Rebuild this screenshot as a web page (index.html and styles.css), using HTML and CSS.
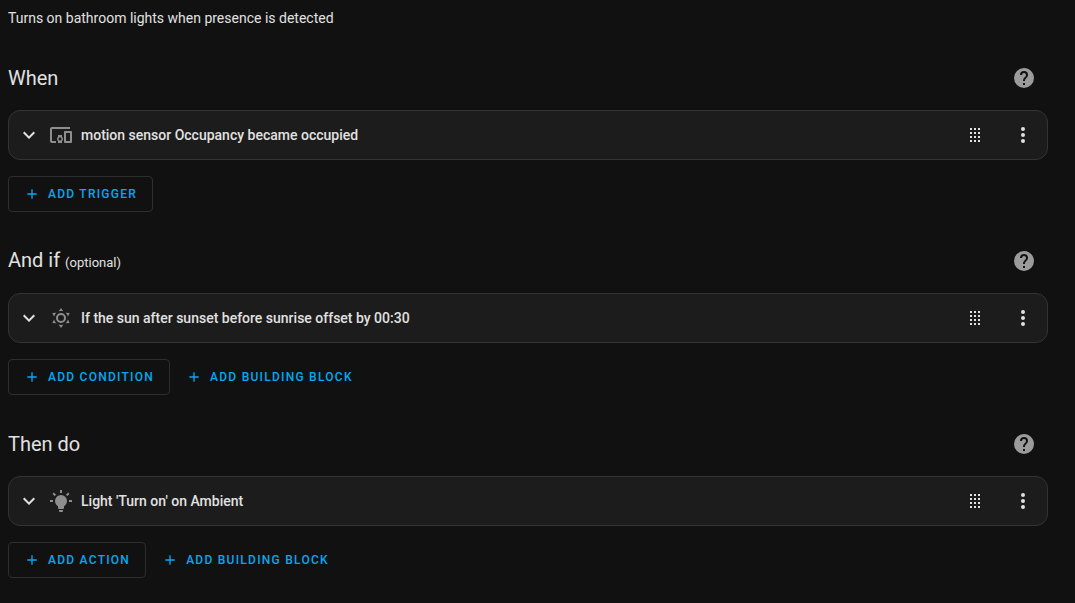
FILE: index.html
```html
<!DOCTYPE html>
<html lang="en">
<head>
  <meta charset="utf-8">
  <meta name="viewport" content="width=device-width, initial-scale=1">
  <title>Automation Editor</title>
  <link rel="stylesheet" href="styles.css">
</head>
<body>
  <!-- shared icons -->
  <svg class="sprite" aria-hidden="true">
    <symbol id="chevron" viewBox="0 0 24 24"><path d="M7.41,8.58L12,13.17L16.59,8.58L18,10L12,16L6,10L7.41,8.58Z"/></symbol>
    <symbol id="plus" viewBox="0 0 24 24"><path d="M19,13H13V19H11V13H5V11H11V5H13V11H19V13Z"/></symbol>
    <symbol id="help" viewBox="0 0 24 24"><path d="M15.07,11.25L14.17,12.17C13.45,12.89 13,13.5 13,15H11V14.5C11,13.39 11.45,12.39 12.17,11.67L13.41,10.41C13.78,10.05 14,9.55 14,9C14,7.89 13.1,7 12,7A2,2 0 0,0 10,9H8A4,4 0 0,1 12,5A4,4 0 0,1 16,9C16,9.88 15.64,10.67 15.07,11.25M13,19H11V17H13M12,2A10,10 0 0,0 2,12A10,10 0 0,0 12,22A10,10 0 0,0 22,12C22,6.47 17.5,2 12,2Z"/></symbol>
    <symbol id="drag" viewBox="0 0 24 24"><path d="M7,19V17H9V19H7M11,19V17H13V19H11M15,19V17H17V19H15M7,15V13H9V15H7M11,15V13H13V15H11M15,15V13H17V15H15M7,11V9H9V11H7M11,11V9H13V11H11M15,11V9H17V11H15M7,7V5H9V7H7M11,7V5H13V7H11M15,7V5H17V7H15Z"/></symbol>
    <symbol id="dots" viewBox="0 0 24 24"><path d="M12,16A2,2 0 0,1 14,18A2,2 0 0,1 12,20A2,2 0 0,1 10,18A2,2 0 0,1 12,16M12,10A2,2 0 0,1 14,12A2,2 0 0,1 12,14A2,2 0 0,1 10,12A2,2 0 0,1 12,10M12,4A2,2 0 0,1 14,6A2,2 0 0,1 12,8A2,2 0 0,1 10,6A2,2 0 0,1 12,4Z"/></symbol>
  </svg>

  <main class="container">
    <p class="description">Turns on bathroom lights when presence is detected</p>

    <section class="section">
      <div class="header">
        <h2>When</h2>
        <button type="button" class="icon-button help" aria-label="Learn about triggers"><svg class="icon"><use href="#help"/></svg></button>
      </div>
      <div class="card">
        <button type="button" class="toggle" aria-expanded="false">
          <svg class="icon"><use href="#chevron"/></svg>
          <svg class="icon type" viewBox="0 0 24 24"><path d="M3 6H21V4H3C1.9 4 1 4.9 1 6V18C1 19.1 1.9 20 3 20H7V18H3V6M13 12H9V13.78C8.39 14.33 8 15.11 8 16C8 16.89 8.39 17.67 9 18.22V20H13V18.22C13.61 17.67 14 16.88 14 16S13.61 14.33 13 13.78V12M11 17.5C10.17 17.5 9.5 16.83 9.5 16S10.17 14.5 11 14.5 12.5 15.17 12.5 16 11.83 17.5 11 17.5M22 8H16C15.5 8 15 8.5 15 9V19C15 19.5 15.5 20 16 20H22C22.5 20 23 19.5 23 19V9C23 8.5 22.5 8 22 8M21 18H17V10H21V18Z"/></svg>
          <span>motion sensor Occupancy became occupied</span>
        </button>
        <button type="button" class="icon-button" aria-label="Move"><svg class="icon"><use href="#drag"/></svg></button>
        <button type="button" class="icon-button" aria-label="Menu"><svg class="icon"><use href="#dots"/></svg></button>
      </div>
      <div class="actions">
        <button type="button" class="button outlined"><svg class="plus"><use href="#plus"/></svg>Add trigger</button>
      </div>
    </section>

    <section class="section">
      <div class="header">
        <h2>And if <small>(optional)</small></h2>
        <button type="button" class="icon-button help" aria-label="Learn about conditions"><svg class="icon"><use href="#help"/></svg></button>
      </div>
      <div class="card">
        <button type="button" class="toggle" aria-expanded="false">
          <svg class="icon"><use href="#chevron"/></svg>
          <svg class="icon type" viewBox="0 0 24 24"><path d="M12,7A5,5 0 0,1 17,12A5,5 0 0,1 12,17A5,5 0 0,1 7,12A5,5 0 0,1 12,7M12,9A3,3 0 0,0 9,12A3,3 0 0,0 12,15A3,3 0 0,0 15,12A3,3 0 0,0 12,9M12,2L14.39,5.42C13.65,5.15 12.84,5 12,5C11.16,5 10.35,5.15 9.61,5.42L12,2M3.34,7L7.5,6.65C6.9,7.16 6.36,7.78 5.94,8.5C5.5,9.24 5.25,10 5.11,10.79L3.34,7M3.36,17L5.12,13.23C5.26,14 5.53,14.78 5.95,15.5C6.37,16.24 6.91,16.86 7.5,17.37L3.36,17M20.65,7L18.88,10.79C18.74,10 18.47,9.23 18.05,8.5C17.63,7.78 17.1,7.15 16.5,6.64L20.65,7M20.64,17L16.5,17.36C17.09,16.85 17.62,16.22 18.04,15.5C18.46,14.77 18.73,14 18.87,13.21L20.64,17M12,22L9.59,18.56C10.33,18.83 11.14,19 12,19C12.82,19 13.63,18.83 14.37,18.56L12,22Z"/></svg>
          <span>If the sun after sunset before sunrise offset by 00:30</span>
        </button>
        <button type="button" class="icon-button" aria-label="Move"><svg class="icon"><use href="#drag"/></svg></button>
        <button type="button" class="icon-button" aria-label="Menu"><svg class="icon"><use href="#dots"/></svg></button>
      </div>
      <div class="actions">
        <button type="button" class="button outlined"><svg class="plus"><use href="#plus"/></svg>Add condition</button>
        <button type="button" class="button"><svg class="plus"><use href="#plus"/></svg>Add building block</button>
      </div>
    </section>

    <section class="section">
      <div class="header">
        <h2>Then do</h2>
        <button type="button" class="icon-button help" aria-label="Learn about actions"><svg class="icon"><use href="#help"/></svg></button>
      </div>
      <div class="card">
        <button type="button" class="toggle" aria-expanded="false">
          <svg class="icon"><use href="#chevron"/></svg>
          <svg class="icon type" viewBox="0 0 24 24"><path d="M12,6A6,6 0 0,1 18,12C18,14.22 16.79,16.16 15,17.2V19A1,1 0 0,1 14,20H10A1,1 0 0,1 9,19V17.2C7.21,16.16 6,14.22 6,12A6,6 0 0,1 12,6M14,21V22A1,1 0 0,1 13,23H11A1,1 0 0,1 10,22V21H14M20,11H23V13H20V11M1,11H4V13H1V11M13,1V4H11V1H13M4.92,3.5L7.05,5.64L5.63,7.05L3.5,4.93L4.92,3.5M16.95,5.63L19.07,3.5L20.5,4.93L18.37,7.05L16.95,5.63Z"/></svg>
          <span>Light 'Turn on' on Ambient</span>
        </button>
        <button type="button" class="icon-button" aria-label="Move"><svg class="icon"><use href="#drag"/></svg></button>
        <button type="button" class="icon-button" aria-label="Menu"><svg class="icon"><use href="#dots"/></svg></button>
      </div>
      <div class="actions">
        <button type="button" class="button outlined"><svg class="plus"><use href="#plus"/></svg>Add action</button>
        <button type="button" class="button"><svg class="plus"><use href="#plus"/></svg>Add building block</button>
      </div>
    </section>
  </main>
</body>
</html>
```
FILE: styles.css
```css
* {
  box-sizing: border-box;
}

body {
  margin: 0;
  padding: 8px;
  background-color: #111111;
  color: #e1e1e1;
  font-family: Roboto, sans-serif;
  font-size: 14px;
  line-height: 20px;
}

button {
  border: none;
  background: none;
  color: inherit;
  font: inherit;
  cursor: pointer;
}

.sprite {
  display: none;
}

.container {
  max-width: 1040px;
}

.description {
  margin: 0 0 26px;
}

.section {
  margin-bottom: 25px;
}

.section:last-child {
  margin-bottom: 0;
}

.header {
  display: flex;
  align-items: center;
  justify-content: space-between;
  margin-bottom: 8px;
}

h2 {
  margin: 0;
  font-size: 20px;
  font-weight: 400;
  line-height: 28px;
}

h2 small {
  font-size: 13px;
}

.icon {
  display: block;
  flex: none;
  width: 24px;
  height: 24px;
  fill: currentColor;
}

.icon-button {
  flex: none;
  width: 48px;
  height: 48px;
  padding: 12px;
}

.help {
  color: #9b9b9b;
}

.type {
  color: #8e8e8e;
}

.card {
  display: flex;
  align-items: center;
  background-color: #1c1c1c;
  border: 1px solid #333333;
  border-radius: 12px;
}

.toggle {
  display: flex;
  flex: 1;
  align-items: center;
  gap: 8px;
  min-height: 48px;
  padding: 0 8px;
  font-weight: 500;
  text-align: left;
}

.actions {
  display: flex;
  flex-wrap: wrap;
  margin-top: 16px;
}

.button {
  display: flex;
  align-items: center;
  gap: 8px;
  height: 36px;
  padding: 0 16px;
  border-radius: 4px;
  color: #03a9f4;
  font-size: 12px;
  font-weight: 500;
  letter-spacing: 1.25px;
  text-transform: uppercase;
}

.outlined {
  padding: 0 15px;
  border: 1px solid #2e2e2e;
}

.plus {
  width: 16px;
  height: 16px;
  fill: currentColor;
}
```
